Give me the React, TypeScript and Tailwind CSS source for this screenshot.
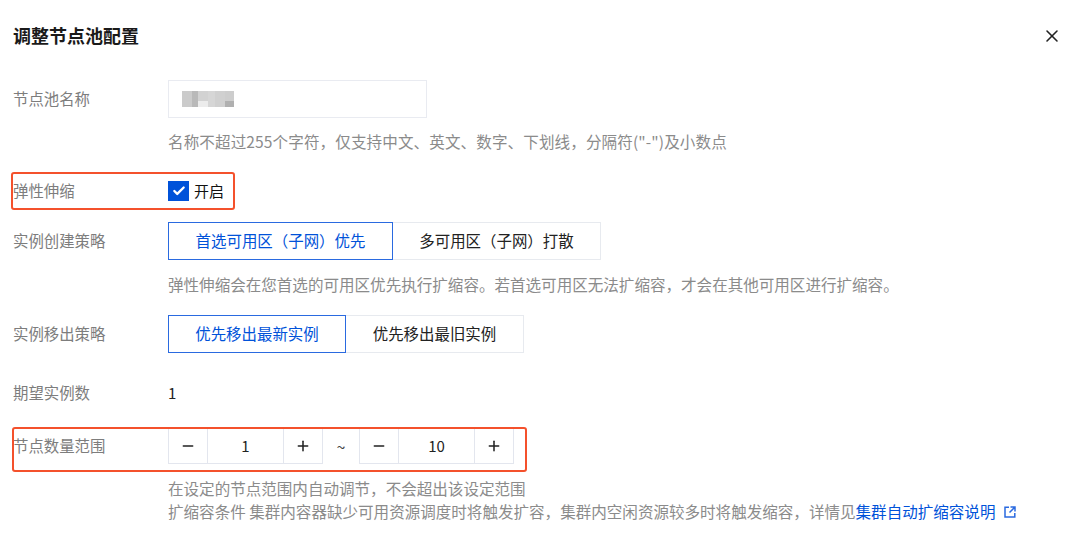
import React from "react";
import { Minus, Plus, X, Check } from "lucide-react";

const font = { fontFamily: '"Noto Sans CJK SC", sans-serif' };

function Label({ children }: { children: React.ReactNode }) {
  return <div className="w-[155px] shrink-0 text-[15.4px] text-[#7d7d7d]">{children}</div>;
}

function Help({ children, className = "" }: { children: React.ReactNode; className?: string }) {
  return <div className={`ml-[155px] h-6 whitespace-nowrap text-[15.55px] leading-6 text-[#8b8b8b] ${className}`}>{children}</div>;
}

function Segmented({ active, other, activeW, otherW }: { active: string; other: string; activeW: string; otherW: string }) {
  return (
    <div className="flex h-[38px] text-[15.45px]">
      <div className={`flex items-center justify-center border-[1.5px] border-[#2a6ae0] text-[#0052d9] ${activeW}`}>{active}</div>
      <div className={`flex items-center justify-center border border-l-0 border-[#e7eaef] text-[#222] ${otherW}`}>{other}</div>
    </div>
  );
}

function Stepper({ value }: { value: string }) {
  return (
    <div className="flex h-[36px] border border-[#e3e6ee] text-[#222]">
      <div className="flex w-[39px] items-center justify-center border-r border-[#e3e6ee]"><Minus size={16} strokeWidth={2.3} /></div>
      <div className="flex w-[76px] items-center justify-center border-r border-[#e3e6ee] text-[15px]">{value}</div>
      <div className="flex w-[38px] items-center justify-center"><Plus size={16} strokeWidth={2.3} /></div>
    </div>
  );
}

function Mosaic() {
  return (
    <div className="flex h-4 w-[52px]">
      <div className="w-[10px] bg-[#cbcbcb]" />
      <div className="w-[6px] bg-[#b9b9b9]" />
      <div className="flex w-[10px] flex-col"><div className="h-[10px] bg-[#d2d2d2]" /><div className="h-[6px] bg-[#ececec]" /></div>
      <div className="w-[7px] bg-[#d6d6d6]" />
      <div className="w-[10px] bg-[#d0d0d0]" />
      <div className="flex w-[9px] flex-col"><div className="h-[10px] bg-[#cdcdcd]" /><div className="h-[6px] bg-[#b0b0b0]" /></div>
    </div>
  );
}

export default function App() {
  return (
    <div className="relative h-[541px] w-[1080px] overflow-hidden bg-white pl-[13px]" style={font}>
      <div className="flex h-[80px] items-start justify-between pt-[23px] pr-[18px]">
        <div className="text-[18px] leading-6 font-bold text-[#1a1a1a]">调整节点池配置</div>
        <X size={20} strokeWidth={1.9} className="mt-[3px] text-[#222]" />
      </div>

      <div className="flex h-[38px] items-center">
        <Label>节点池名称</Label>
        <div className="flex h-[38px] w-[259px] items-center border border-[#e9ebf1] pl-[13px]"><Mosaic /></div>
      </div>
      <Help className="mt-[11px] tracking-[0.12px]">名称不超过255个字符，仅支持中文、英文、数字、下划线，分隔符("-")及小数点</Help>

      <div className="relative mt-[26px] flex h-6 items-center">
        <Label>弹性伸缩</Label>
        <div className="flex h-[20px] w-[21px] items-center justify-center bg-[#0052d9]"><Check size={14} strokeWidth={4} className="text-white" /></div>
        <div className="ml-[5px] text-[15px] text-[#111]">开启</div>
        <div className="absolute top-[-7px] left-[-2px] h-[38px] w-[224px] rounded-[3px] border-2 border-[#f4512c]" />
      </div>

      <div className="mt-[19px] flex items-center">
        <Label>实例创建策略</Label>
        <Segmented active="首选可用区（子网）优先" other="多可用区（子网）打散" activeW="w-[225px]" otherW="w-[208px]" />
      </div>
      <Help className="mt-[12px]">弹性伸缩会在您首选的可用区优先执行扩缩容。若首选可用区无法扩缩容，才会在其他可用区进行扩缩容。</Help>

      <div className="mt-[19px] flex items-center">
        <Label>实例移出策略</Label>
        <Segmented active="优先移出最新实例" other="优先移出最旧实例" activeW="w-[178px]" otherW="w-[178px]" />
      </div>

      <div className="mt-[28px] flex h-6 items-center">
        <Label>期望实例数</Label>
        <div className="text-[15px] text-[#222]">1</div>
      </div>

      <div className="relative mt-[23px] flex h-[36px] items-center">
        <Label>节点数量范围</Label>
        <Stepper value="1" />
        <div className="flex w-[36px] items-center justify-center text-[16px] text-[#444]">~</div>
        <Stepper value="10" />
        <div className="absolute top-[-1px] left-[-1px] h-[45px] w-[515px] rounded-[3px] border-2 border-[#f4512c]" />
      </div>
      <Help className="mt-[12px]">在设定的节点范围内自动调节，不会超出该设定范围</Help>
      <div className="ml-[155px] flex h-6 items-center whitespace-nowrap text-[15.55px] text-[#8b8b8b]">
        扩缩容条件 集群内容器缺少可用资源调度时将触发扩容，集群内空闲资源较多时将触发缩容，详情见
        <span className="text-[#0052d9]">集群自动扩缩容说明</span>
        <svg width="12" height="12" viewBox="0 0 12 12" fill="none" stroke="#2a6ae0" strokeWidth="1.5" className="ml-[9px]">
          <path d="M5 1.2H1v9.8h9.8V7" />
          <path d="M6.5 1h4.5v4.5M11 1L5.5 6.5" />
        </svg>
      </div>
    </div>
  );
}
